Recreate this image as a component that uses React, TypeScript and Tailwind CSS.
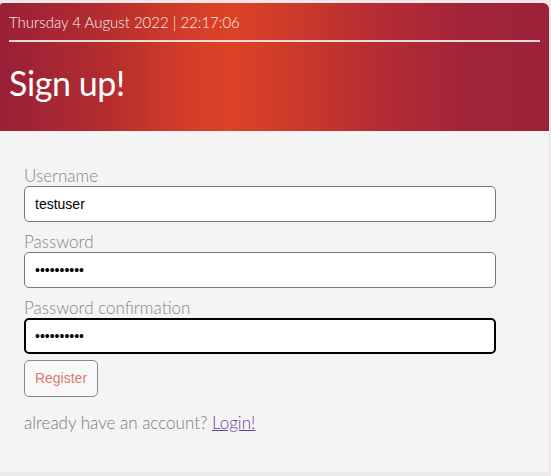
import React from 'react';

const raleway = { fontFamily: 'Lato, "Open Sans", sans-serif' };
const arial = { fontFamily: '"Liberation Sans", Arial, sans-serif' };

export default function App() {
  return (
    <div className="w-[551px] h-[476px] bg-[#ede9ea] pt-[3px] pr-[2px] overflow-hidden" style={raleway}>
      <div className="rounded-tr-[6px] rounded-tl-[3px] overflow-hidden bg-[#f4f4f4] h-[469px]">
        {/* Header */}
        <div className="h-[128px] bg-[linear-gradient(90deg,#9a2037_0%,#b12c30_18%,#d33d28_34%,#dc4226_42%,#cf3b2a_52%,#b62d33_68%,#a2243a_85%,#9c2239_100%)] px-[9px] pt-[8px]">
          <div className="text-[15px] font-light text-[#fbeeee] leading-[22px] pb-[7px] border-b-2 border-[#e8dada]">
            Thursday 4 August 2022 | 22:17:06
          </div>
          <h1 className="mt-[21px] text-[34px] font-normal text-white leading-[40px] tracking-[-0.4px]">Sign up!</h1>
        </div>

        {/* Form */}
        <div className="px-[24px] pt-[34px]">
          <label className="block text-[17px] font-light text-[#858585] leading-[21px]">Username</label>
          <input
            readOnly
            value="testuser"
            className="block w-[472px] h-[36px] rounded-[5px] border border-[#777] bg-white px-[10px] text-[14px] text-black outline-none"
            style={arial}
          />
          <label className="block text-[17px] font-light text-[#858585] leading-[21px] mt-[9px]">Password</label>
          <input
            readOnly
            type="password"
            value="testuser12"
            className="block w-[472px] h-[36px] rounded-[5px] border border-[#777] bg-white px-[10px] text-[14px] text-black outline-none"
            style={arial}
          />
          <label className="block text-[17px] font-light text-[#858585] leading-[21px] mt-[9px]">Password confirmation</label>
          <input
            readOnly
            type="password"
            value="testuser12"
            className="block w-[472px] h-[36px] rounded-[5px] border-2 border-black bg-white px-[9px] text-[14px] text-black outline-none"
            style={arial}
          />
          <button
            className="mt-[6px] h-[37px] w-[74px] rounded-[5px] border border-[#888] bg-[#f8f8f8] text-[14px] text-[#dc7a74]"
            style={arial}
          >
            Register
          </button>
          <p className="mt-[15px] text-[17px] font-light text-[#7a7a7a] leading-[21px]">
            already have an account?{' '}
            <a href="#" className="underline text-[#6a3ea0]">Login!</a>
          </p>
        </div>
      </div>
    </div>
  );
}
